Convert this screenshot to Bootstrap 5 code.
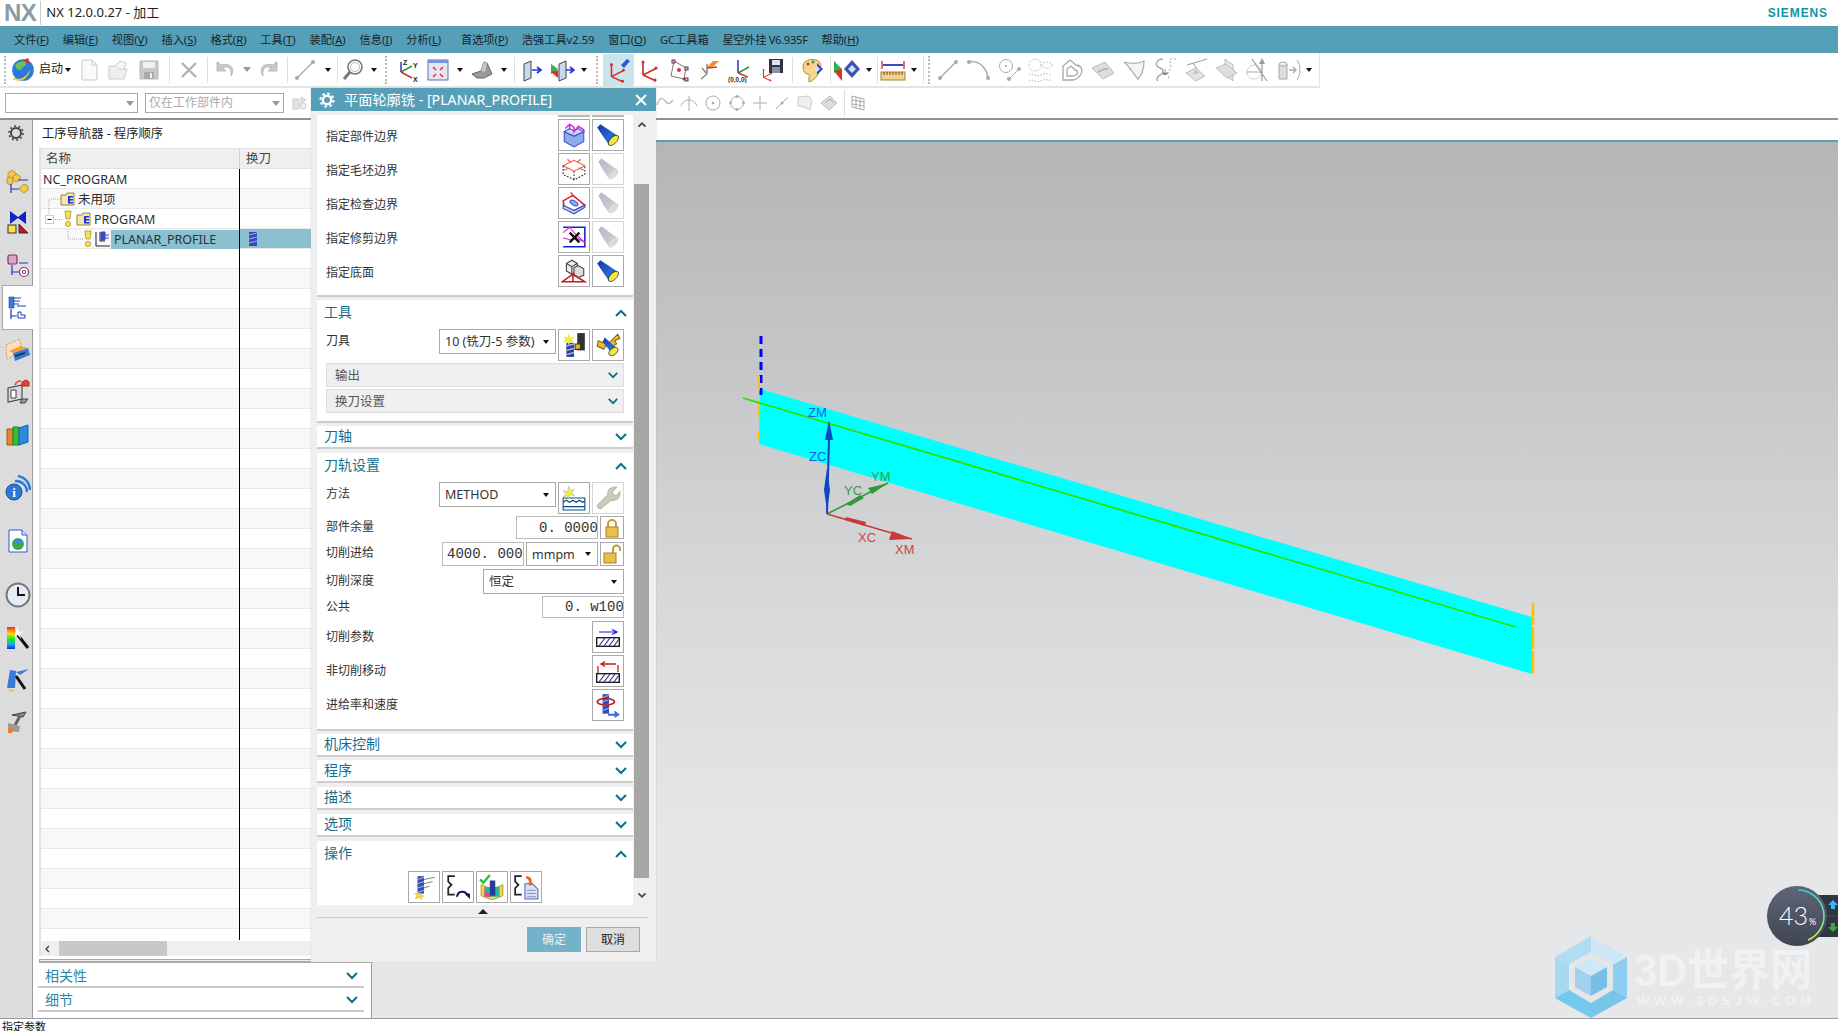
<!DOCTYPE html>
<html lang="zh-CN">
<head>
<meta charset="UTF-8">
<title>NX 12.0.0.27 - 加工</title>
<link href="https://cdn.jsdelivr.net/npm/bootstrap@5.3.2/dist/css/bootstrap.min.css" rel="stylesheet">
<style>
html,body{height:100%;margin:0;overflow:hidden;background:#fff}
body{font-family:"Noto Sans","Noto Sans CJK SC",sans-serif;font-size:12px;color:#333;line-height:1.2}
#app{position:relative;width:1838px;height:1031px;overflow:hidden}
/* window chrome */
.title-bar{height:26px}
.nx-logo{font-family:"Liberation Sans",sans-serif;font-weight:700;font-size:24px;color:#8b9ba6;margin-left:4px;padding-right:4px;border-right:1px solid #ccc;line-height:1;letter-spacing:-.5px}
.title-txt{font-size:13px;color:#222;margin-left:5px}
.siemens{font-family:"Liberation Sans",sans-serif;font-weight:700;font-size:12px;color:#0f97a3;letter-spacing:.9px;margin-right:10px}
.menu-bar{height:27px;background:#559fb9;padding-left:14px;color:#17242b;gap:13.800px;white-space:nowrap;font-size:11.200px}
.menu-bar span.wide{margin-left:6px}
.menu-bar span.tight{letter-spacing:-.3px}
.tool-one{height:35px;width:1320px;border-bottom:2px solid #e4e4e4;border-right:1px solid #e4e4e4;padding-left:1px}
.tb{height:30px;display:flex;align-items:center;justify-content:center;flex:none}
.tb svg{display:block}
.w2{width:2px}.w6{width:6px}.w7{width:7px}.w10{width:10px}.w12{width:12px}.w14{width:14px}.w16{width:16px}.w30{width:30px}.w31{width:31px}
.w4{width:4px}
.grip{border-left:2px dotted #b9b9b9;height:28px;width:2px;margin:0 4px}
.vsep{width:1px;height:26px;background:#dedede}
.caret-d{width:0;height:0;border-left:3.500px solid transparent;border-right:3.500px solid transparent;border-top:4px solid #111;display:block}
.act{background:#c9e4ea;height:32px;width:31px}
.start-txt{font-size:12px;color:#222;padding-left:1px;width:24px;white-space:nowrap}
.tool-two{height:32px;border-bottom:2px solid #8d9296}
.cbo{height:20px;border:1px solid #a8a8a8;background:#fff;padding:0 3px;color:#aaa;flex:none}
.cbo-a{width:133px;margin-left:5px}
.cbo-b{width:139px;margin-left:7px}
.caret-g{border-top-color:#999;border-left-width:4px;border-right-width:4px;border-top-width:5px}
.sel-tools{margin-left:348px;gap:6px}
/* left side */
.work{height:898px}
.rail{width:33px;background:#dcdcdc;border-right:1px solid #9a9a9a;flex:none}
.rail-cell{height:42px;display:flex;align-items:center;justify-content:center;flex:none;padding-left:3px}
.rail-gear{height:26px;margin-bottom:14px;padding-left:0}
.rail-on{background:#fff;border:1px solid #a8a8a8;border-right:0;height:45px;margin:-1px -1px -1px 2px;z-index:2;padding-left:0}
.rail-g12{margin-top:12px}
.rail-g11{margin-top:11px}
.rail-g2{margin-top:1px}
.side{width:339px;flex:none;border-right:1px solid #9a9a9a}
.side-title{height:28px;padding-left:9px;font-size:12.300px;color:#222;flex:none}
.tree-wrap{margin-left:6px;border:2px solid #e2e2e2;border-width:1px 0 0 2px;height:808px;flex:none}
.col-a{width:199px;flex:none}
.tree-head{height:20px;background:#efefef;border-bottom:1px solid #e2e2e2}
.tree-head .col-a{border-right:1px solid #cfcfcf;padding-left:5px;height:100%;display:flex;align-items:center;color:#444;font-size:12.500px}
.tree-head .col-b{padding-left:6px;color:#444;font-size:12.500px}
.tree-row{height:20px;border-bottom:1px solid #e9e9e9;background:#fff;color:#2b2f33;font-size:12.500px}
.tree-row.alt{background:#f8f8f8}
.tree-row .col-a{height:20px;border-right:1px solid #000;display:flex;align-items:center;white-space:nowrap}
.tree-row .col-b{display:flex;align-items:center}
.root-name{padding-left:2px}
.row-sel .col-b{background:#8bc0d0;height:19px;flex:1;padding-left:9px}
.sel-name{background:#8bc0d0;height:19px;flex:1;display:flex;align-items:center;padding-left:3px;margin-left:1px;color:#26333a}
.gap-lbl{margin-left:2px}
.gap-fold{margin-left:3px}
.tree-fill{height:691px;background:repeating-linear-gradient(#fff 0,#fff 19px,#e9e9e9 19px,#e9e9e9 20px,#f8f8f8 20px,#f8f8f8 39px,#e9e9e9 39px,#e9e9e9 40px)}
.tree-fill .col-a{height:100%;border-right:1px solid #000}
.h-scroll{height:15px;margin-top:1px;background:#efefef}
.h-thumb{width:108px;height:15px;background:#c8c8c8;margin-left:9px}
.h-end{height:4px;margin:3px 0 1px 6px;border:1px solid #aaa;border-width:1px 0 2px 1px;background:#eee;flex:none}
.side-sec{height:24px;margin-left:5px;width:326px;border-bottom:2px solid #ccc;padding:2px 5px 0 7px;color:#2c86a8;font-size:14px;flex:none}
/* graphics area */
.gfx{flex:1;min-width:0}
.gfx-strip{height:22px;border-bottom:2px solid #559fb9;background:#fff;flex:none}
.gfx-view{height:876px;background:linear-gradient(#b4b5b7,#d6d7d9 50%,#e6e7e9 80%);flex:none}
.gfx-view svg{display:block}
.status-bar{height:13px;border-top:1px solid #9a9a9a;font-size:11px;color:#111;padding-left:2px;line-height:16px;overflow:hidden}
/* dialog floats over the window */
.dlg{position:absolute;left:311px;top:88px;width:345px;height:874px;background:#efefef;box-shadow:0 0 1px #aaa;z-index:5}
.dlg-head{height:23px;background:#559fb9;color:#fff;font-size:14.200px;padding:0 9px 0 8px}
.dlg-head .ttl{margin-left:5px;white-space:nowrap}
.dlg-main{margin:4px 7px 0 6px;height:790px}
.dlg-pane{width:316px;flex:none;height:790px}
.sec{background:#fff;border-bottom:2px solid #cdcdcd}
.sec-top{padding-bottom:8px;margin-bottom:3px}
.clip-row{height:2px;padding:0 9px;margin-bottom:2px;overflow:hidden}
.clip-box{width:32px;height:2px;background:#bbb;margin-left:2px}
.fld{padding:0 9px;color:#333}
.lb{padding-top:5px}
.h32{height:32px}.h24{height:24px}.h23{height:23px}.h25{height:25px}.h22{height:22px}
.m2{margin-bottom:2px}.m3{margin-bottom:3px}.m4{margin-bottom:4px}
.ib{width:32px;height:32px;border:1px solid #a9a9a9;background:#fff;display:flex;align-items:center;justify-content:center;margin-left:2px;flex:none;padding:0}
.ib.off{border-color:#d6d6d6}
.ib.lk{height:100%;width:24px}
.sec-head{height:25px;padding:0 5px 0 7px;color:#12708f;font-size:14px}
.sec-one{height:23px;margin-bottom:3px}
.sec-one.gap4{margin-bottom:4px}
.sub-bar{margin:0 9px 2px;height:24px;background:#efefef;border:1px solid #dedede;padding:0 4px 0 8px;color:#555;font-size:12.500px}
.sub-bar.last{margin-bottom:0}
.dd{border:1px solid #a9a9a9;height:100%;padding:0 6px 0 5px;background:#fff;color:#333;flex:none;font-size:12.500px;white-space:nowrap}
.dd-tool{width:117px;height:25px}
.dd-unit{width:72px;margin-left:2px}
.dd-depth{width:141px}
.num-in.form-control{font-family:"Liberation Mono",monospace;font-size:14px;color:#333;border:1px solid #bbb;border-radius:0;padding:0;height:100%;text-align:left;width:82px;min-height:0;flex:none;background:#fff;box-shadow:none}
.num-in.pad-wide{padding-left:22px}
.num-in.pad-tight{padding-left:4px}
.ops{margin-top:5px;gap:2px}
.ops .ib{margin:0}
.vbar{width:15px;margin-left:1px;flex:none;height:790px}
.vb-top{height:69px;padding-top:6px}
.vb-thumb{height:694px;background:#a6a6a6}
.vb-bot{height:27px;padding-top:14px}
.tri-up{width:0;height:0;border-left:5px solid transparent;border-right:5px solid transparent;border-bottom:5px solid #222;display:block}
.tri-strip{height:13px;margin:0 7px 0 6px;border-bottom:1px solid #ccc}
.dlg-foot{padding:9px 16px 0 0;gap:5px}
.btn.ok-btn,.btn.no-btn{width:54px;height:25px;padding:0;border-radius:0;font-size:12px;line-height:1}
.btn.ok-btn{background:#73b2c8;border:1px solid #73b2c8;color:#e7f3f7}
.btn.no-btn{background:#dedede;border:1px solid #a9a9a9;color:#222}
</style>
</head>
<body>
<svg width="0" height="0" class="d-block position-absolute">
  <defs>
    <linearGradient id="gBlue" x1="0" y1="0" x2="1" y2="1"><stop offset="0" stop-color="#14349e"/><stop offset=".6" stop-color="#2a68d8"/><stop offset="1" stop-color="#0e2a80"/></linearGradient>
    <linearGradient id="gGray" x1="0" y1="0" x2="1" y2="1"><stop offset="0" stop-color="#b4bac6"/><stop offset="1" stop-color="#cfd3dc"/></linearGradient>
    <linearGradient id="gRing" x1="0" y1="0" x2="0" y2="1"><stop offset="0" stop-color="#36d6cc"/><stop offset=".6" stop-color="#7be38f"/><stop offset="1" stop-color="#d6e64e"/></linearGradient>
    <linearGradient id="gBadge" x1="0" y1="0" x2="0" y2="1"><stop offset="0" stop-color="#5f6577"/><stop offset="1" stop-color="#3f4553"/></linearGradient>
    <linearGradient id="gRainbow" x1="0" y1="0" x2="0" y2="1"><stop offset="0" stop-color="#f22"/><stop offset=".3" stop-color="#fd0"/><stop offset=".55" stop-color="#1e2"/><stop offset=".8" stop-color="#1ad"/><stop offset="1" stop-color="#22d"/></linearGradient>
    <symbol id="flash" viewBox="0 0 24 24"><path d="M2 5l3-3 9 6 7 5-8 8-5-7z" fill="url(#gBlue)"/><ellipse cx="17" cy="17" rx="6" ry="3" transform="rotate(-45 17 17)" fill="#f3e63c" stroke="#123" stroke-width=".6"/></symbol>
    <symbol id="flash-off" viewBox="0 0 24 24"><path d="M3 5l3-3 8 6 7 5-8 8-5-7z" fill="url(#gGray)"/><ellipse cx="17" cy="17" rx="6" ry="3" transform="rotate(-45 17 17)" fill="#dcdcd2"/></symbol>
    <symbol id="chev" viewBox="0 0 14 10"><path d="M2 2l5 5 5-5" fill="none" stroke="#0f6d8b" stroke-width="2"/></symbol>
    <symbol id="chev-up" viewBox="0 0 14 10"><path d="M2 8l5-5 5 5" fill="none" stroke="#0f6d8b" stroke-width="2"/></symbol>
    <symbol id="bulb" viewBox="0 0 10 18"><path d="M2 1h6L7 9H3z" fill="#f4e34a" stroke="#a08a20" stroke-width=".7"/><circle cx="5" cy="14" r="2.600" fill="#f4e34a" stroke="#a08a20" stroke-width=".7"/></symbol>
    <symbol id="fold" viewBox="0 0 16 14"><path d="M1 3h5l1-2h7v12H1z" fill="#f6e6a8" stroke="#9a8240"/><path d="M8 4h5v1.500H10V7h3v1.500h-3V10h3v1.500H8z" fill="#1a35d8"/></symbol>
    <symbol id="csys" viewBox="0 0 24 24"><g fill="none" stroke="#d82a22" stroke-width="1.700"><path d="M6 17V3M6 17l14-7M6 17l13 6"/></g><g fill="#d82a22"><circle cx="6" cy="4" r="1.500"/><circle cx="19" cy="10" r="1.500"/><circle cx="18" cy="22" r="1.500"/></g></symbol>
    <symbol id="hatch" viewBox="0 0 24 10"><rect x=".7" y=".7" width="22.600" height="8.600" fill="#fff" stroke="#111" stroke-width="1.300"/><path d="M3 9l6-8M8 9l6-8M13 9l6-8M18 9l5-7" stroke="#33338c" stroke-width="1.200"/></symbol>
  </defs>
</svg>

<div id="app" class="d-flex flex-column">
  <div class="title-bar d-flex align-items-center">
    <span class="nx-logo">NX</span>
    <span class="title-txt">NX 12.0.0.27 - 加工</span>
    <span class="siemens ms-auto">SIEMENS</span>
  </div>

  <div class="menu-bar d-flex align-items-center">
    <span>文件(<u>F</u>)</span><span>编辑(<u>E</u>)</span><span>视图(<u>V</u>)</span><span>插入(<u>S</u>)</span><span>格式(<u>R</u>)</span><span>工具(<u>T</u>)</span><span>装配(<u>A</u>)</span><span>信息(<u>I</u>)</span><span>分析(<u>L</u>)</span><span class="wide">首选项(<u>P</u>)</span><span>浩强工具v2.59</span><span>窗口(<u>O</u>)</span><span>GC工具箱</span><span class="tight">星空外挂 V6.935F</span><span>帮助(<u>H</u>)</span>
  </div>

  <!-- main toolbar -->
  <div class="tool-one d-flex align-items-center">
    <div class="tb w7"><i class="grip"></i></div>
    <div class="tb w30"><svg width="26" height="26" viewBox="0 0 24 24"><circle cx="12" cy="12" r="10" fill="#2a7ad8"/><path d="M5 7c3-3 8-4 10-2 1 3-3 3-4 6-3 2-6 1-6-4z" fill="#6fc05a"/><path d="M12 3l5-2 1 6z" fill="#d8322a"/><path d="M3 19c6 3 12 0 16-8-2 9-9 13-16 10z" fill="#f0c93a"/></svg></div>
    <div class="start-txt">启动</div>
    <div class="tb w12"><i class="caret-d"></i></div>
    <div class="tb w30"><svg width="22" height="24" viewBox="0 0 22 24"><path d="M4 2h10l5 5v15H4z" fill="#fafafa" stroke="#c9c9c9"/><path d="M14 2v5h5" fill="none" stroke="#c9c9c9"/></svg></div>
    <div class="tb w30"><svg width="24" height="24" viewBox="0 0 24 24"><path d="M2 8h8l2 3h8l-3 10H2z" fill="#eee" stroke="#ccc"/><path d="M8 8l5-5 6 2-2 6" fill="#f6f6f6" stroke="#ccc"/></svg></div>
    <div class="tb w30"><svg width="20" height="20" viewBox="0 0 20 20"><path d="M1 1h18v18H1z" fill="#c8c8c8" stroke="#bbb"/><path d="M4 2h12v6H4z" fill="#f1f1f1"/><path d="M5 12h10v7H5z" fill="#aaa"/><path d="M11 13h2v5h-2z" fill="#eee"/></svg></div>
    <div class="tb w10"><i class="vsep"></i></div>
    <div class="tb w30"><svg width="18" height="18" viewBox="0 0 18 18"><path d="M2 2l14 14M16 2L2 16" stroke="#b2b2b2" stroke-width="2.400"/></svg></div>
    <div class="tb w6"><i class="vsep"></i></div>
    <div class="tb w30"><svg width="22" height="20" viewBox="0 0 22 20"><path d="M3 2v9h9l-3-3c5-3 9 0 8 8 4-6 1-14-10-11L4 2z" fill="#c9c9c9" stroke="#bbb"/></svg></div>
    <div class="tb w14"><i class="caret-d caret-g"></i></div>
    <div class="tb w30"><svg width="22" height="20" viewBox="0 0 22 20"><path d="M19 2v9h-9l3-3C8 5 4 8 5 16 1 10 4 2 15 5l3-3z" fill="#c9c9c9" stroke="#bbb"/></svg></div>
    <div class="tb w6"><i class="vsep"></i></div>
    <div class="tb w30"><svg width="22" height="22" viewBox="0 0 22 22"><path d="M3 19L19 3" stroke="#a8a8a8" stroke-width="1.200"/><circle cx="3" cy="19" r="2" fill="#a8a8a8"/><circle cx="19" cy="3" r="2" fill="#a8a8a8"/></svg></div>
    <div class="tb w16"><i class="caret-d"></i></div>
    <div class="tb w2"><i class="vsep"></i></div>
    <div class="tb w30"><svg width="22" height="24" viewBox="0 0 22 24"><circle cx="13" cy="9" r="7" fill="#fff" stroke="#777" stroke-width="1.600"/><circle cx="13" cy="9" r="4.500" fill="none" stroke="#bbb"/><path d="M8 14l-6 7" stroke="#777" stroke-width="3"/></svg></div>
    <div class="tb w12"><i class="caret-d"></i></div>
    <div class="tb w12"><i class="grip"></i></div>
    <div class="tb w30"><svg width="24" height="24" viewBox="0 0 24 24"><path d="M6 14V4" stroke="#2a35c0" stroke-width="1.500"/><path d="M6 14l11-6" stroke="#2a9a3a" stroke-width="1.500"/><path d="M6 14l11 6" stroke="#d0302a" stroke-width="1.500"/><text x="8" y="7" font-size="7" font-weight="700" fill="#222" font-family="Liberation Sans">Z</text><text x="18" y="10" font-size="7" font-weight="700" fill="#222" font-family="Liberation Sans">Y</text><text x="18" y="24" font-size="7" font-weight="700" fill="#222" font-family="Liberation Sans">X</text></svg></div>
    <div class="tb w31"><svg width="22" height="24" viewBox="0 0 22 24"><rect x="1" y="2" width="20" height="20" fill="#e6e6f2" stroke="#5a6ec0"/><rect x="1" y="2" width="20" height="3" fill="#7d95d8"/><path d="M6 9l3 3M16 9l-3 3M6 19l3-3M16 19l-3-3" stroke="#e0402a" stroke-width="1.600"/></svg></div>
    <div class="tb w14"><i class="caret-d"></i></div>
    <div class="tb w30"><svg width="24" height="20" viewBox="0 0 24 20"><path d="M2 14l9-3 3-9 3 1 5 11-8 4H7z" fill="#9a9a9a" stroke="#666"/><path d="M11 11l3-9 3 1-2 9z" fill="#c8c8c8"/></svg></div>
    <div class="tb w14"><i class="caret-d"></i></div>
    <div class="tb w6"><i class="vsep"></i></div>
    <div class="tb w30"><svg width="22" height="24" viewBox="0 0 22 24"><path d="M3 6l7-3v17l-7 3z" fill="#c8d8ee" stroke="#444"/><path d="M11 12h8m-3-3l4 3-4 3" fill="none" stroke="#2a35d8" stroke-width="1.700"/></svg></div>
    <div class="tb w30"><svg width="26" height="24" viewBox="0 0 26 24"><path d="M2 6l7 5-7 5z" fill="#2fb35a"/><path d="M2 14l7 6V12z" fill="#d8322a"/><path d="M10 6l7-3v17l-7 3z" fill="#c8d8ee" stroke="#444"/><path d="M17 12h7m-3-3l4 3-4 3" fill="none" stroke="#2a35d8" stroke-width="1.700"/></svg></div>
    <div class="tb w14"><i class="caret-d"></i></div>
    <div class="tb w12"><i class="grip"></i></div>
    <div class="tb act"><svg width="26" height="26" viewBox="0 0 26 26"><use href="#csys" width="22" height="22" y="4"/><path d="M15 8l6-6 3 2-6 7z" fill="#2a5ad8"/></svg></div>
    <div class="tb w30"><svg width="24" height="24"><use href="#csys" width="24" height="24"/></svg></div>
    <div class="tb w30"><svg width="24" height="24" viewBox="0 0 24 24"><path d="M4 18L7 3l12 7-2 11z" fill="none" stroke="#777"/><g fill="#d8322a"><circle cx="12" cy="12" r="2"/><circle cx="17" cy="21" r="1.500"/></g><g fill="#e8d23a" stroke="#5a2a9a"><rect x="5" y="2" width="3" height="3"/><rect x="18" y="9" width="3" height="3"/><rect x="18" y="20" width="3" height="3"/></g></svg></div>
    <div class="tb w31"><svg width="24" height="24" viewBox="0 0 24 24"><path d="M9 16V6M9 16l-6 5M9 16l-5-6" stroke="#888" stroke-width="1.500"/><path d="M9 10l10-1" stroke="#d8322a" stroke-width="1.500"/><path d="M9 9l6-6h6l-6 6z" fill="#f09030"/></svg></div>
    <div class="tb w31"><svg width="26" height="26" viewBox="0 0 26 26"><path d="M10 16V3" stroke="#2a35c0" stroke-width="1.500"/><path d="M10 16l11-6" stroke="#2a9a3a" stroke-width="1.500"/><path d="M10 16l10 4" stroke="#d8322a" stroke-width="1.500"/><text x="0" y="25" font-size="6.500" font-weight="700" fill="#333" font-family="Liberation Sans">(0,0,0)</text></svg></div>
    <div class="tb w31"><svg width="24" height="24" viewBox="0 0 24 24"><use href="#csys" width="14" height="15" y="9"/><rect x="9" y="1" width="14" height="14" fill="#334"/><rect x="12" y="2" width="8" height="5" fill="#dfe4f0"/><rect x="12" y="9" width="8" height="6" fill="#8a92a8"/></svg></div>
    <div class="tb w10"><i class="vsep"></i></div>
    <div class="tb w31"><svg width="26" height="26" viewBox="0 0 26 26"><path d="M3 9c0-7 14-9 17-3 3 4-5 6-2 10-1 5-6 8-9 9-1-5 2-7-1-8-3 0-5-3-5-8z" fill="#f3d88c" stroke="#a88a3a"/><circle cx="8" cy="7" r="1.500" fill="#d8322a"/><circle cx="13" cy="5" r="1.500" fill="#2a9a3a"/><path d="M17 6l6 6-6 6z" fill="#2a4ab8"/><path d="M14 12l3-3 3 3-3 3z" fill="#cfe0f8"/></svg></div>
    <div class="tb w4"><i class="vsep"></i></div>
    <div class="tb w30"><svg width="28" height="26" viewBox="0 0 28 26"><path d="M1 4l8 8-8 4z" fill="#2fb35a"/><path d="M1 14l8-2v12z" fill="#d8322a"/><path d="M19 3l8 9-8 9-8-9z" fill="#3a55b0"/><path d="M19 8l4 4-4 4-4-4z" fill="#cfe0f8"/></svg></div>
    <div class="tb w14"><i class="caret-d"></i></div>
    <div class="tb w2"><i class="vsep"></i></div>
    <div class="tb w30"><svg width="26" height="24" viewBox="0 0 26 24"><path d="M2 3v8M24 3v8" stroke="#d8322a" stroke-width="1.400"/><path d="M3 7h20" stroke="#2a35c0" stroke-width="1.800"/><rect x="1" y="14" width="24" height="8" fill="#f0d68a" stroke="#9a8440"/><path d="M4 14v3M7 14v3M10 14v3M13 14v3M16 14v3M19 14v3M22 14v3" stroke="#9a3a20"/></svg></div>
    <div class="tb w12"><i class="caret-d"></i></div>
    <div class="tb w6"><i class="vsep"></i></div>
    <div class="tb w6"><i class="grip"></i></div>
    <!-- sketch curve tools, greyed out -->
    <div class="tb w31"><svg width="22" height="22" viewBox="0 0 22 22"><path d="M3 19L19 3" stroke="#a8a8a8" stroke-width="1.200"/><circle cx="3" cy="19" r="2" fill="#a8a8a8"/><circle cx="19" cy="3" r="2" fill="#a8a8a8"/></svg></div>
    <div class="tb w31"><svg width="24" height="22" viewBox="0 0 24 22"><path d="M2 3c10-2 18 6 19 16" fill="none" stroke="#a8a8a8" stroke-width="1.400"/><circle cx="2" cy="3" r="2" fill="#a8a8a8"/><circle cx="21" cy="19" r="2" fill="#a8a8a8"/></svg></div>
    <div class="tb w31"><svg width="24" height="24" viewBox="0 0 24 24"><circle cx="8" cy="8" r="6.500" fill="none" stroke="#aaa"/><circle cx="8" cy="8" r="1" fill="#aaa"/><path d="M11 21l10-10" stroke="#aaa"/><circle cx="11" cy="21" r="2" fill="#aaa"/><circle cx="21" cy="11" r="2" fill="#aaa"/></svg></div>
    <div class="tb w31"><svg width="26" height="26" viewBox="0 0 26 26"><g fill="none" stroke="#b0b0b0" stroke-dasharray="1.500 1.500"><ellipse cx="7" cy="8" rx="6" ry="6"/><ellipse cx="19" cy="8" rx="5" ry="3"/><path d="M1 18c4-3 7 3 12 0s7 0 11-1M1 24c4-3 7 3 12 0s7 0 11-1"/></g></svg></div>
    <div class="tb w31"><svg width="22" height="24" viewBox="0 0 22 24"><path d="M2 22V8l7-6 6 5c5 0 7 5 5 9s-6 6-8 6zM6 18v-7l4-3 4 4c3 0 3 4 1 5s-3 1-3 1z" fill="none" stroke="#a8a8a8" stroke-width="1.300"/></svg></div>
    <div class="tb w31"><svg width="24" height="24" viewBox="0 0 24 24"><path d="M1 10l13-6 9 11-11 6z" fill="#ddd" stroke="#bbb"/><path d="M7 14c4-2 7-4 10-3" stroke="#aaa" fill="none" stroke-width="1.400"/></svg></div>
    <div class="tb w31"><svg width="24" height="24" viewBox="0 0 24 24"><path d="M2 4c7 2 14 2 20-1 0 6-1 13-6 18-4-4-8-12-14-17z" fill="#f4f4f4" stroke="#b0b0b0" stroke-width="1.300"/></svg></div>
    <div class="tb w31"><svg width="24" height="26" viewBox="0 0 24 26"><path d="M10 2C3 2 1 9 7 11c4 1 4 6 0 7-3 1-4 5-2 6" fill="none" stroke="#aaa" stroke-width="1.400"/><path d="M23 2h-6l1 8-3 6 1 7" fill="none" stroke="#aaa" stroke-dasharray="2 2"/><path d="M12 12v6l-3-2h6l-3 2" stroke="#999"/></svg></div>
    <div class="tb w31"><svg width="24" height="26" viewBox="0 0 24 26"><path d="M3 8l20-6M9 6l4 6" stroke="#999"/><path d="M2 16l10-5 9 8-9 5z" fill="#e4e4e4" stroke="#bbb"/><path d="M9 17l3-4 3 3z" fill="#bbb"/></svg></div>
    <div class="tb w31"><svg width="24" height="26" viewBox="0 0 24 26"><path d="M10 2l8 6v16l-8-6z" fill="#e8e8e8" stroke="#bbb"/><path d="M1 11l10-4 11 9-10 5z" fill="#dedede" stroke="#bbb"/></svg></div>
    <div class="tb w31"><svg width="26" height="26" viewBox="0 0 26 26"><circle cx="9" cy="15" r="7" fill="none" stroke="#aaa" stroke-dasharray="1.500 1"/><path d="M2 15h14" stroke="#aaa"/><path d="M7 2l15 22M17 24V6" stroke="#999" stroke-width="1.200"/><path d="M17 1l3 6h-6z" fill="#999"/></svg></div>
    <div class="tb w31"><svg width="26" height="26" viewBox="0 0 26 26"><path d="M3 7h8v15H3z" fill="#ddd" stroke="#aaa"/><ellipse cx="7" cy="7" rx="4" ry="2" fill="#f0f0f0" stroke="#aaa"/><path d="M13 13h6m-2-3l3 3-3 3" stroke="#aaa" fill="none" stroke-width="1.400"/><path d="M21 3c4 5 4 14 0 20" fill="none" stroke="#aaa"/></svg></div>
    <div class="tb w10"><i class="caret-d"></i></div>
  </div>

  <!-- selection bar -->
  <div class="tool-two d-flex align-items-center">
    <div class="cbo cbo-a d-flex align-items-center justify-content-end"><i class="caret-d caret-g"></i></div>
    <div class="cbo cbo-b d-flex align-items-center justify-content-between"><span>仅在工作部件内</span><i class="caret-d caret-g"></i></div>
    <svg class="ms-2" width="16" height="18" viewBox="0 0 16 18"><path d="M1 5h6v10H1zM9 3l5 3-5 3z" fill="#e2e2e2" stroke="#ccc"/><circle cx="11" cy="12" r="3" fill="#eee" stroke="#ccc"/></svg>
    <div class="sel-tools d-flex align-items-center">
      <svg width="18" height="16" viewBox="0 0 18 16"><path d="M1 10c3-8 5-8 8-4s5 3 8-1" fill="none" stroke="#bbb" stroke-width="1.400"/></svg>
      <svg width="18" height="18" viewBox="0 0 18 18"><path d="M9 2v15M1 12c2-5 5-6 8-6s6 1 8 6" fill="none" stroke="#aaa"/></svg>
      <svg width="18" height="18" viewBox="0 0 18 18"><circle cx="9" cy="9" r="7" fill="none" stroke="#aaa"/><circle cx="9" cy="9" r="1.300" fill="#aaa"/></svg>
      <svg width="18" height="18" viewBox="0 0 18 18"><circle cx="9" cy="9" r="6.500" fill="none" stroke="#aaa"/><g fill="#aaa"><circle cx="9" cy="2.500" r="1.400"/><circle cx="9" cy="15.500" r="1.400"/><circle cx="2.500" cy="9" r="1.400"/><circle cx="15.500" cy="9" r="1.400"/></g></svg>
      <svg width="16" height="16" viewBox="0 0 16 16"><path d="M8 1v14M1 8h14" stroke="#aaa"/></svg>
      <svg width="16" height="16" viewBox="0 0 16 16"><path d="M2 14L14 2" stroke="#aaa"/><circle cx="8" cy="8" r="1.500" fill="#aaa"/></svg>
      <svg width="18" height="18" viewBox="0 0 18 18"><path d="M2 3l11-1 3 5-2 9-6-3-6-1z" fill="#eee" stroke="#ccc"/></svg>
      <svg width="18" height="18" viewBox="0 0 18 18"><path d="M1 9l9-7 7 7-8 7z" fill="#ddd" stroke="#bbb"/><path d="M5 9l5-4 4 4" fill="none" stroke="#aaa"/></svg>
      <i class="vsep"></i>
      <svg width="14" height="16" viewBox="0 0 14 16"><path d="M1 1l12 3v11L1 12zM5 2v11M9 3v11M1 5l12 2M1 9l12 2" fill="none" stroke="#aaa"/></svg>
    </div>
  </div>

  <div class="work d-flex">
    <div class="rail d-flex flex-column">
      <div class="rail-cell rail-gear"><svg width="16" height="16" viewBox="0 0 16 16"><circle cx="8" cy="8" r="5" fill="none" stroke="#444" stroke-width="2"/><circle cx="8" cy="8" r="7" fill="none" stroke="#444" stroke-width="1.600" stroke-dasharray="2 2.400"/></svg></div>
      <div class="rail-cell"><svg width="24" height="26" viewBox="0 0 24 26"><g fill="#f3c94a" stroke="#b8862a" stroke-width=".8"><path d="M2 5l4-3 4 3v4l-4 2-4-2z"/><path d="M7 8l4-2 3 2v4l-4 2-3-2z"/><path d="M1 10l3-1 3 2v4l-3 2-3-2z"/><path d="M14 19l4-3 4 2v4l-4 3-4-3z"/></g><path d="M12 12h10M5 16v9M5 21h8" stroke="#1a35c0" stroke-width="1.200"/></svg></div>
      <div class="rail-cell"><svg width="22" height="26" viewBox="0 0 22 26"><path d="M3 1l8 6 8-6v13l-8-6-8 6z" fill="#1420c8"/><rect x="1" y="15" width="8" height="8" fill="#f6e34a" stroke="#333"/><path d="M12 23v-9l9 9z" fill="#c8181a" stroke="#333"/></svg></div>
      <div class="rail-cell"><svg width="24" height="26" viewBox="0 0 24 26"><rect x="2" y="3" width="9" height="9" rx="1.500" fill="#d8a8c0" stroke="#8a2a6a" stroke-width="1.200"/><path d="M13 11h9M6 13v10M6 20h8" stroke="#1a35c0" stroke-width="1.200"/><circle cx="18" cy="20" r="4.500" fill="#fff" stroke="#8a2a6a" stroke-width="1.200"/><circle cx="18" cy="20" r="1.600" fill="none" stroke="#8a2a6a"/></svg></div>
      <div class="rail-cell rail-on"><svg width="24" height="26" viewBox="0 0 24 26"><path d="M3 2h5v11H3z" fill="#3a7ad8" stroke="#1a4aa0" stroke-width=".6"/><path d="M8 3h7M8 6h6M8 9h5" stroke="#1a4aa0"/><path d="M11 11h9M5 14v10M5 21h6" stroke="#1a35c0" stroke-width="1.200"/><path d="M12 17h3v3h4v3h-7z" fill="#fff" stroke="#1a35c0"/></svg></div>
      <div class="rail-cell"><svg width="26" height="26" viewBox="0 0 26 26"><path d="M1 8l14-6 1 12-14 8z" fill="#f7e0c8" stroke="#e89858" stroke-dasharray="2 1"/><path d="M8 16l15-5 2 7-15 6z" fill="#2a7ed8"/><path d="M8 16l15-5-7-2-12 5z" fill="#f5a030"/><path d="M10 18l10-3v2l-10 3z" fill="#333"/></svg></div>
      <div class="rail-cell"><svg width="24" height="26" viewBox="0 0 24 26"><path d="M2 9l14-3v14l-14 3z" fill="#d8d8d8" stroke="#444" stroke-width="1.100"/><path d="M5 11h5v8H5z" fill="#fff" stroke="#444"/><path d="M16 20h6l-3 4h-5z" fill="#999" stroke="#444"/><path d="M16 3l4-2 3 2v4h-7z" fill="#e8432a" stroke="#a82a1a"/><path d="M9 6c1-3 3-4 6-4" fill="none" stroke="#e8432a" stroke-width="1.500"/></svg></div>
      <div class="rail-cell"><svg width="24" height="24" viewBox="0 0 24 24"><path d="M1 7h6v16H1z" fill="#e8872a" stroke="#a05a10"/><path d="M7 5h6v18H7z" fill="#2fc03a" stroke="#1a8a20"/><path d="M13 6l9-3v17l-9 3z" fill="#2a8ae0" stroke="#1a60a8"/></svg></div>
      <div class="rail-cell rail-g12"><svg width="26" height="26" viewBox="0 0 26 26"><path d="M10 6a11 11 0 0 1 12 11M13 1a14 14 0 0 1 12 14" fill="none" stroke="#2a7ad8" stroke-width="2.400"/><circle cx="9" cy="17" r="8" fill="#2a7ad8" stroke="#1a4aa0"/><text x="9" y="22" font-size="13" font-weight="700" fill="#fff" text-anchor="middle" font-family="Liberation Serif">i</text></svg></div>
      <div class="rail-cell rail-g11"><svg width="22" height="24" viewBox="0 0 22 24"><path d="M2 1h13l5 5v17H2z" fill="#fff" stroke="#2a5ad0"/><path d="M15 1v5h5" fill="#d8e4f8" stroke="#2a5ad0"/><circle cx="11" cy="15" r="6" fill="#3fa84a"/><path d="M7 12c3-3 6-3 9 0-2 3-6 4-9 0z" fill="#3a8ad8"/></svg></div>
      <div class="rail-cell rail-g12"><svg width="26" height="26" viewBox="0 0 26 26"><circle cx="13" cy="13" r="11.500" fill="#e4ecf8" stroke="#777" stroke-width="2"/><path d="M13 5v8h7" fill="none" stroke="#111" stroke-width="2"/></svg></div>
      <div class="rail-cell rail-g2"><svg width="24" height="26" viewBox="0 0 24 26"><rect x="1" y="2" width="8" height="22" fill="url(#gRainbow)"/><path d="M11 9l11 14" stroke="#111" stroke-width="3"/><path d="M11 1l2 6 5-1-4 3 1 5-3-4-4 2 2-5z" fill="#fff"/></svg></div>
      <div class="rail-cell"><svg width="26" height="26" viewBox="0 0 26 26"><path d="M5 3l6 1-1 17H2z" fill="#3a7ad8"/><path d="M11 5l13-3-9 6z" fill="#3a7ad8"/><path d="M2 22l8 1-3 2z" fill="#f0c93a"/><path d="M11 9l9 13" stroke="#111" stroke-width="3"/></svg></div>
      <div class="rail-cell"><svg width="24" height="26" viewBox="0 0 24 26"><path d="M6 6l14-3-3 5z" fill="#888" stroke="#444"/><path d="M14 7L7 20" stroke="#666" stroke-width="3"/><path d="M2 14l12 3-1 6-11-1z" fill="#9a9a9a"/><path d="M2 19l6 1-2 4H2z" fill="#f0782a"/></svg></div>
    </div>

    <div class="side d-flex flex-column">
      <div class="side-title d-flex align-items-center">工序导航器 - 程序顺序</div>
      <div class="tree-wrap">
        <div class="tree-head d-flex align-items-center"><div class="col-a">名称</div><div class="col-b">换刀</div></div>
        <div class="tree-row d-flex"><div class="col-a"><span class="root-name">NC_PROGRAM</span></div></div>
        <div class="tree-row alt d-flex"><div class="col-a">
          <svg width="19" height="20"><path d="M8 20V10H19" fill="none" stroke="#aaa" stroke-dasharray="1 1"/></svg>
          <svg width="16" height="14"><use href="#fold" width="16" height="14"/></svg><span class="gap-lbl">未用项</span></div></div>
        <div class="tree-row d-flex"><div class="col-a">
          <svg width="22" height="20"><path d="M8 0V6" stroke="#aaa" stroke-dasharray="1 1"/><rect x="4.500" y="6.500" width="8" height="8" fill="#fff" stroke="#ccc"/><path d="M6.500 10.500h4" stroke="#111"/><path d="M14 10.500h7" stroke="#aaa" stroke-dasharray="1 1"/></svg>
          <svg width="10" height="18"><use href="#bulb" width="10" height="18"/></svg>
          <svg class="gap-fold" width="16" height="14"><use href="#fold" width="16" height="14"/></svg><span class="gap-lbl">PROGRAM</span></div></div>
        <div class="tree-row alt row-sel d-flex"><div class="col-a">
          <svg width="42" height="20"><path d="M27 0V10H42" fill="none" stroke="#aaa" stroke-dasharray="1 1"/></svg>
          <svg width="10" height="18"><use href="#bulb" width="10" height="18"/></svg>
          <svg class="gap-lbl" width="15" height="16" viewBox="0 0 15 16"><path d="M1 1v14h14M5 1v9h5" fill="none" stroke="#222"/><path d="M6 1h4v8H6zM10 4h4M10 7h4" fill="#3a4ac0" stroke="#3a4ac0"/></svg>
          <span class="sel-name">PLANAR_PROFILE</span></div>
          <div class="col-b"><svg width="8" height="14" viewBox="0 0 8 14"><rect width="8" height="14" fill="#3a48b8"/><path d="M0 3l8-2M0 7l8-2M0 11l8-2" stroke="#9fb0e8"/></svg></div></div>
        <div class="tree-fill"><div class="col-a"></div></div>
        <div class="h-scroll d-flex align-items-center">
          <svg class="ms-1" width="5" height="8" viewBox="0 0 5 8"><path d="M4 1L1 4l3 3" fill="none" stroke="#444" stroke-width="1.400"/></svg>
          <div class="h-thumb"></div>
        </div>
      </div>
      <div class="h-end"></div>
      <div class="side-sec d-flex align-items-center justify-content-between"><span>相关性</span><svg width="14" height="10"><use href="#chev" width="14" height="10"/></svg></div>
      <div class="side-sec d-flex align-items-center justify-content-between"><span>细节</span><svg width="14" height="10"><use href="#chev" width="14" height="10"/></svg></div>
    </div>

    <div class="gfx d-flex flex-column">
      <div class="gfx-strip"></div>
      <div class="gfx-view">
        <svg width="1466" height="876" viewBox="372 142 1466 876">
          <polygon points="760,389 1532,617 1532,674 759,444" fill="#00ffff"/>
          <path d="M761 336V395" stroke="#0000ff" stroke-width="3" stroke-dasharray="8 5"/>
          <path d="M759 376V440" stroke="#ffc000" stroke-width="2" stroke-dasharray="14 14"/>
          <path d="M1533 603V674" stroke="#ffc000" stroke-width="2.500" stroke-dasharray="22 2"/>
          <path d="M743 398L1516 627" stroke="#2ee000" stroke-width="1.800"/>
          <path d="M827 514L829 438" stroke="#0f46c8" stroke-width="2"/>
          <path d="M829 420l-4 20h8z" fill="#0f46c8"/><path d="M827 468l-3 22 3 20 3-20z" fill="#0f46c8"/>
          <path d="M827 514L888 483" stroke="#2f9a3a" stroke-width="1.600"/>
          <path d="M846 504l14-9 4 3-14 8z" fill="#2f9a3a"/><path d="M888 483l-20 5 4 6z" fill="#2f9a3a"/>
          <path d="M827 514L912 539" stroke="#c83a3a" stroke-width="1.600"/>
          <path d="M846 517l20 5-1 4-20-6z" fill="#c83a3a"/><path d="M912 539l-20-8-3 9z" fill="#c83a3a"/>
          <g font-family="Liberation Sans, sans-serif" font-size="13">
            <text x="808" y="417" fill="#1a5fe0">ZM</text><text x="809" y="461" fill="#1a5fe0">ZC</text>
            <text x="844" y="495" fill="#3d9a4a">YC</text><text x="871" y="481" fill="#3d9a4a">YM</text>
            <text x="858" y="542" fill="#d04545">XC</text><text x="895" y="554" fill="#d04545">XM</text>
          </g>
          <!-- watermark -->
          <polygon points="1591,977 1555,957 1591,936" fill="#b2dcf4"/>
          <polygon points="1591,977 1591,936 1627,957" fill="#cfe7f5"/>
          <polygon points="1591,977 1627,957 1627,998" fill="#8dcdf1"/>
          <polygon points="1591,977 1627,998 1591,1018" fill="#79c5ea"/>
          <polygon points="1591,977 1591,1018 1555,998" fill="#74c7ee"/>
          <polygon points="1591,977 1555,998 1555,957" fill="#a9d9f2"/>
          <polygon points="1591,952 1613,964 1613,990 1591,1003 1569,990 1569,964" fill="#e5e6e8"/>
          <polygon points="1591,958 1607,967 1591,976 1575,967" fill="#cde8f7"/>
          <polygon points="1575,967 1591,976 1591,996 1575,987" fill="#9ed2ef"/>
          <polygon points="1607,967 1591,976 1591,996 1607,987" fill="#78bfe6"/>
          <text x="1634" y="986" font-family="Liberation Sans, Noto Sans CJK SC, sans-serif" font-weight="700" font-size="44" fill="#f0f1f3" textLength="178" lengthAdjust="spacingAndGlyphs">3D世界网</text>
          <text x="1637" y="1005" font-family="Liberation Sans, sans-serif" font-weight="700" font-size="13" fill="#f0f1f3" textLength="174">WWW.3DSJW.COM</text>
          <!-- memory ball -->
          <rect x="1815" y="895" width="23" height="42" fill="#2f3542"/><path d="M1820 916h18" stroke="#454b58"/>
          <path d="M1833 900l5 5h-3v4h-4v-4h-3z" fill="#3fb4ee"/><path d="M1833 932l5-5h-3v-4h-4v4h-3z" fill="#2fae3a"/>
          <circle cx="1797" cy="916" r="30" fill="url(#gBadge)"/>
          <path d="M1798 890A26 26 0 0 1 1808 940" fill="none" stroke="url(#gRing)" stroke-width="1.600"/>
          <text x="1779" y="925" font-family="Lato, sans-serif" font-weight="300" font-size="25" fill="#fff">43</text>
          <text x="1809" y="925" font-family="Lato, sans-serif" font-size="9" fill="#fff">%</text>
        </svg>
      </div>
    </div>
  </div>
  <div class="status-bar">指定参数</div>

  <!-- operation dialog -->
  <div class="dlg d-flex flex-column">
    <div class="dlg-head d-flex align-items-center">
      <svg width="16" height="16" viewBox="0 0 16 16"><circle cx="8" cy="8" r="4.200" fill="none" stroke="#fff" stroke-width="2.400"/><circle cx="8" cy="8" r="6.600" fill="none" stroke="#fff" stroke-width="2" stroke-dasharray="2.600 2.600"/></svg>
      <span class="ttl ps-1">平面轮廓铣 - [PLANAR_PROFILE]</span>
      <svg class="ms-auto" width="12" height="12" viewBox="0 0 12 12"><path d="M1 1l10 10M11 1L1 11" stroke="#fff" stroke-width="2"/></svg>
    </div>
    <div class="dlg-main d-flex">
      <div class="dlg-pane d-flex flex-column">
        <div class="sec sec-top">
          <div class="clip-row d-flex justify-content-end"><i class="clip-box"></i><i class="clip-box"></i></div>
          <div class="fld h32 m2 d-flex align-items-center"><span class="me-auto lb">指定部件边界</span>
            <button class="ib"><svg width="26" height="26" viewBox="0 0 24 24"><path d="M3 9l9 4 9-4v9l-9 5-9-5z" fill="#8fa8ee" stroke="#3a55c0"/><path d="M3 9l5-3 4 2 4-2 5 3-9 4z" fill="#c8d4f8" stroke="#3a55c0"/><path d="M4 6l4-4 4 3v4l4-5 5 3v3M8 2v5" fill="none" stroke="#d82ad8" stroke-width="1.400"/></svg></button>
            <button class="ib"><svg width="26" height="26"><use href="#flash" width="26" height="26"/></svg></button></div>
          <div class="fld h32 m2 d-flex align-items-center"><span class="me-auto lb">指定毛坯边界</span>
            <button class="ib"><svg width="26" height="26" viewBox="0 0 24 24"><path d="M2 9l10-5 10 5-10 5z" fill="none" stroke="#f0604a"/><path d="M2 9v8l10 5 10-5V9M12 14v8" fill="none" stroke="#222" stroke-dasharray="1.500 1.500"/><path d="M6 3l3 3M18 3l-3 3M3 13l5-2M21 13l-5-2" stroke="#f0604a"/></svg></button>
            <button class="ib off"><svg width="26" height="26"><use href="#flash-off" width="26" height="26"/></svg></button></div>
          <div class="fld h32 m2 d-flex align-items-center"><span class="me-auto lb">指定检查边界</span>
            <button class="ib"><svg width="26" height="26" viewBox="0 0 24 24"><path d="M2 10l9-5 11 9-10 5-9-3z" fill="#fff" stroke="#d82020" stroke-width="1.400"/><path d="M2 14v3l10 5 10-6v-2l-10 5z" fill="#c8d4f8" stroke="#3a55c0"/><ellipse cx="12" cy="12" rx="4" ry="2" transform="rotate(30 12 12)" fill="#8fa8ee" stroke="#3a55c0"/><path d="M9 2l2 3" stroke="#d82020"/></svg></button>
            <button class="ib off"><svg width="26" height="26"><use href="#flash-off" width="26" height="26"/></svg></button></div>
          <div class="fld h32 m2 d-flex align-items-center"><span class="me-auto lb">指定修剪边界</span>
            <button class="ib"><svg width="26" height="26" viewBox="0 0 24 24"><path d="M2 3h20v18H2" fill="none" stroke="#1a1ad8" stroke-width="1.400"/><path d="M2 8l6-5 5 6 8 7M2 13l8 2 3-3 9 5" fill="none" stroke="#d82ad8"/><path d="M8 8l9 9M17 8l-9 9" stroke="#111" stroke-width="2.200"/></svg></button>
            <button class="ib off"><svg width="26" height="26"><use href="#flash-off" width="26" height="26"/></svg></button></div>
          <div class="fld h32 d-flex align-items-center"><span class="me-auto lb">指定底面</span>
            <button class="ib"><svg width="26" height="26" viewBox="0 0 24 24"><path d="M5 5l5-3 5 3v7l-5 3-5-3z" fill="#eee" stroke="#444"/><path d="M12 9l4-2 5 3v6l-5 2-4-2z" fill="#ddd" stroke="#444"/><path d="M5 5l5 3 5-3M10 8v7" fill="none" stroke="#444"/><path d="M1 22l10-7 11 7zM11 15v7" fill="none" stroke="#c81818" stroke-width="1.400"/></svg></button>
            <button class="ib"><svg width="26" height="26"><use href="#flash" width="26" height="26"/></svg></button></div>
        </div>

        <div class="sec sec-top">
          <div class="sec-head d-flex align-items-center justify-content-between m4"><span>工具</span><svg width="14" height="10"><use href="#chev-up" width="14" height="10"/></svg></div>
          <div class="fld h32 m2 d-flex"><span class="me-auto lb">刀具</span>
            <div class="dd dd-tool d-flex align-items-center justify-content-between"><span>10 (铣刀-5 参数)</span><i class="caret-d"></i></div>
            <button class="ib"><svg width="26" height="26" viewBox="0 0 24 24"><path d="M5 10h7v13H5z" fill="#2a3a98"/><path d="M5 13l7-2M5 17l7-2M5 21l7-2" stroke="#9fb0e8" stroke-width="1.400"/><path d="M15 1h7v16h-7z" fill="#333"/><path d="M13 11h5v5h-5z" fill="#e8b030" stroke="#333"/><path d="M7 1l1.500 4 4-1-2.500 3 2.500 3-4-1L7 12l-1-3-4 1 2-3-2-3 4 1z" fill="#f3ec3c"/></svg></button>
            <button class="ib"><svg width="26" height="26" viewBox="0 0 24 24"><path d="M3 8l8 3-3 5-6-3zM12 11l9-9 2 4-5 2 2 3-5 3z" fill="#e8b830" stroke="#8a6a10"/><path d="M7 9l2-4 10 9-4 5z" fill="url(#gBlue)"/><ellipse cx="17" cy="18" rx="5" ry="3" transform="rotate(-40 17 18)" fill="#f3e63c" stroke="#123" stroke-width=".6"/></svg></button></div>
          <div class="sub-bar d-flex align-items-center justify-content-between"><span>输出</span><svg width="12" height="9"><use href="#chev" width="12" height="9"/></svg></div>
          <div class="sub-bar last d-flex align-items-center justify-content-between"><span>换刀设置</span><svg width="12" height="9"><use href="#chev" width="12" height="9"/></svg></div>
        </div>

        <div class="sec sec-head sec-one gap4 d-flex align-items-center justify-content-between"><span>刀轴</span><svg width="14" height="10"><use href="#chev" width="14" height="10"/></svg></div>

        <div class="sec sec-top">
          <div class="sec-head d-flex align-items-center justify-content-between m4"><span>刀轨设置</span><svg width="14" height="10"><use href="#chev-up" width="14" height="10"/></svg></div>
          <div class="fld h32 m2 d-flex"><span class="me-auto lb">方法</span>
            <div class="dd dd-tool d-flex align-items-center justify-content-between"><span>METHOD</span><i class="caret-d"></i></div>
            <button class="ib"><svg width="26" height="26" viewBox="0 0 24 24"><path d="M2 12h20v11H2z" fill="#fff" stroke="#0a4a8a"/><path d="M2 16l3-2 3 2 3-2 3 2 3-2 3 2 2-1M2 20h20" fill="none" stroke="#0a4a8a" stroke-width="1.200"/><path d="M7 1l1.500 4 4-1-2.500 3 2.500 3-4-1L7 13l-1-3-4 1 2-3-2-3 4 1z" fill="#f3ec3c" stroke="#7ab0d8" stroke-width=".4"/></svg></button>
            <button class="ib off"><svg width="26" height="26" viewBox="0 0 24 24"><path d="M3 21l-1-2 10-10c-1-4 3-8 8-7l-4 4 1 3 3 1 3-4c1 5-3 9-8 8L5 22z" fill="#cfcabb" stroke="#bdb8a8"/></svg></button></div>
          <div class="fld h23 m3 d-flex"><span class="me-auto pt-1">部件余量</span>
            <input class="num-in pad-wide form-control" readonly value="0. 00000">
            <button class="ib lk"><svg width="16" height="20" viewBox="0 0 16 20"><path d="M4 9V6a4 4 0 0 1 8 0v3" fill="none" stroke="#c89a30" stroke-width="2"/><rect x="2" y="9" width="12" height="10" fill="#e8c04a" stroke="#a8802a"/></svg></button></div>
          <div class="fld h24 m3 d-flex"><span class="me-auto pt-1">切削进给</span>
            <input class="num-in pad-tight form-control" readonly value="4000. 0000">
            <div class="dd dd-unit d-flex align-items-center justify-content-between"><span>mmpm</span><i class="caret-d"></i></div>
            <button class="ib lk"><svg width="18" height="20" viewBox="0 0 18 20"><path d="M10 9V5a3.500 3.500 0 0 1 7 0v2" fill="none" stroke="#c89a30" stroke-width="2"/><rect x="1" y="9" width="12" height="10" fill="#e8c04a" stroke="#a8802a"/></svg></button></div>
          <div class="fld h25 m2 d-flex"><span class="me-auto lb">切削深度</span>
            <div class="dd dd-depth d-flex align-items-center justify-content-between"><span>恒定</span><i class="caret-d"></i></div></div>
          <div class="fld h22 m3 d-flex"><span class="me-auto pt-1">公共</span>
            <input class="num-in pad-wide form-control" readonly value="0. w1000"></div>
          <div class="fld h32 m2 d-flex align-items-center"><span class="me-auto">切削参数</span>
            <button class="ib"><svg width="24" height="26" viewBox="0 0 24 26"><path d="M3 8h17m-4-2.500L21 8l-5 2.500" fill="none" stroke="#1a1ad8" stroke-width="1.200"/><use href="#hatch" y="13" width="24" height="10"/></svg></button></div>
          <div class="fld h32 m2 d-flex align-items-center"><span class="me-auto">非切削移动</span>
            <button class="ib"><svg width="24" height="26" viewBox="0 0 24 26"><path d="M5 6h15M9 3.500L5 6l4 2.500M2 8v7M22 14V7" fill="none" stroke="#c81818" stroke-width="1.300"/><use href="#hatch" y="15" width="24" height="10"/></svg></button></div>
          <div class="fld h32 d-flex align-items-center"><span class="me-auto">进给率和速度</span>
            <button class="ib"><svg width="26" height="26" viewBox="0 0 24 24"><path d="M7 2h6v18H7z" fill="#3a48b8"/><path d="M7 5l6-2M7 9l6-2M7 13l6-2M7 17l6-2" stroke="#9fb0e8"/><ellipse cx="10" cy="9" rx="8" ry="3" fill="none" stroke="#c81818" stroke-width="1.600"/><path d="M12 20h6v-3l5 4-5 3v-2h-6z" fill="#3a6ae0"/></svg></button></div>
        </div>

        <div class="sec sec-head sec-one d-flex align-items-center justify-content-between"><span>机床控制</span><svg width="14" height="10"><use href="#chev" width="14" height="10"/></svg></div>
        <div class="sec sec-head sec-one gap4 d-flex align-items-center justify-content-between"><span>程序</span><svg width="14" height="10"><use href="#chev" width="14" height="10"/></svg></div>
        <div class="sec sec-head sec-one gap4 d-flex align-items-center justify-content-between"><span>描述</span><svg width="14" height="10"><use href="#chev" width="14" height="10"/></svg></div>
        <div class="sec sec-head sec-one gap4 d-flex align-items-center justify-content-between"><span>选项</span><svg width="14" height="10"><use href="#chev" width="14" height="10"/></svg></div>
        <div class="flex-grow-1 bg-white">
          <div class="sec-head d-flex align-items-center justify-content-between"><span>操作</span><svg width="14" height="10"><use href="#chev-up" width="14" height="10"/></svg></div>
          <div class="ops d-flex justify-content-center">
            <button class="ib"><svg width="26" height="26" viewBox="0 0 24 24"><path d="M6 2h6v16H6z" fill="#3a48b8"/><path d="M6 5l6-2M6 9l6-2M6 13l6-2M6 17l6-2" stroke="#9fb0e8"/><path d="M12 5l10-2M12 9l8-2M12 13l5-2" stroke="#888"/><path d="M9 19l1 4-3-2-3 2 2-3-2-2h3zM9 19l3 2" stroke="#e8c83a" fill="#f3ec3c"/></svg></button>
            <button class="ib"><svg width="26" height="26" viewBox="0 0 24 24"><path d="M9 2H3v5l3 3-3 3v6h6" fill="none" stroke="#222" stroke-width="1.600"/><path d="M11 21c1-6 8-6 10-1" fill="none" stroke="#0a1a4a" stroke-width="1.800"/><path d="M23 23v-5h-5z" fill="#0a1a4a"/></svg></button>
            <button class="ib"><svg width="26" height="26" viewBox="0 0 24 24"><path d="M2 10l10 4 10-4v10l-10 4-10-4z" fill="#f0d84a" stroke="#c8a02a"/><path d="M5 12h14v9H5z" fill="#20b8a8"/><path d="M5 14l6 7H5z" fill="#f0408a"/><path d="M10 6h5v14h-5z" fill="#2a3a98"/><path d="M1 5l3 3 6-7" fill="none" stroke="#2fc03a" stroke-width="2.200"/></svg></button>
            <button class="ib"><svg width="26" height="26" viewBox="0 0 24 24"><path d="M8 2H2v5l3 3-3 3v6h6" fill="none" stroke="#222" stroke-width="1.600"/><path d="M11 9h7l5 5v9H11z" fill="#d8e0f4" stroke="#5a6ac0"/><path d="M13 15h8M13 18h8M13 21h8" stroke="#8a92a8"/><path d="M12 2c4 0 6 2 5 6l2 0-3 3-3-3 2 0c0-2-1-3-3-4z" fill="#e8632a"/></svg></button>
          </div>
        </div>
      </div>
      <div class="vbar d-flex flex-column">
        <div class="vb-top d-flex justify-content-center"><svg width="10" height="7" viewBox="0 0 14 10"><path d="M2 8l5-5 5 5" fill="none" stroke="#444" stroke-width="2.400"/></svg></div>
        <div class="vb-thumb"></div>
        <div class="vb-bot d-flex justify-content-center"><svg width="10" height="7" viewBox="0 0 14 10"><path d="M2 2l5 5 5-5" fill="none" stroke="#444" stroke-width="2.400"/></svg></div>
      </div>
    </div>
    <div class="tri-strip d-flex justify-content-center align-items-center"><i class="tri-up"></i></div>
    <div class="dlg-foot d-flex justify-content-end">
      <button class="btn ok-btn">确定</button>
      <button class="btn no-btn">取消</button>
    </div>
  </div>
</div>

<script src="https://cdn.jsdelivr.net/npm/bootstrap@5.3.2/dist/js/bootstrap.bundle.min.js"></script>
</body>
</html>
